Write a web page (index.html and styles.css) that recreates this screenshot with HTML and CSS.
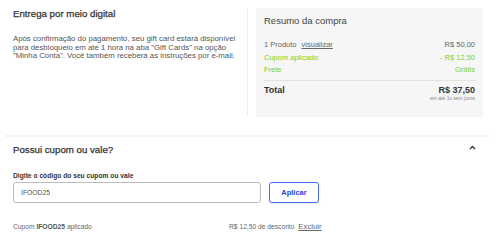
FILE: index.html
```html
<!DOCTYPE html>
<html lang="pt-BR">
<head>
<meta charset="utf-8">
<link rel="stylesheet" href="styles.css">
</head>
<body>
<div class="top">
  <div class="delivery">
    <h2 class="title">Entrega por meio digital</h2>
    <p class="desc">Após confirmação do pagamento, seu gift card estará disponível para desbloqueio em até 1 hora na aba "Gift Cards" na opção "Minha Conta". Você também receberá as instruções por e-mail.</p>
  </div>
  <div class="summary">
    <h2 class="sum-title">Resumo da compra</h2>
    <div class="row"><span>1 Produto <a class="link">visualizar</a></span><span>R$ 50,00</span></div>
    <div class="row green"><span>Cupom aplicado</span><span>- R$ 12,50</span></div>
    <div class="row green"><span>Frete</span><span>Grátis</span></div>
    <div class="total">
      <span class="total-label">Total</span>
      <div class="total-val">
        <span class="price">R$ 37,50</span>
        <span class="terms">em até 1x sem juros</span>
      </div>
    </div>
  </div>
</div>
<div class="sep"></div>
<div class="coupon">
  <div class="coupon-head">
    <h2 class="title">Possui cupom ou vale?</h2>
    <svg class="chev" width="7" height="5" viewBox="0 0 7 5"><path d="M1 4 L3.5 1.5 L6 4" fill="none" stroke="#333" stroke-width="1.3"/></svg>
  </div>
  <label class="label">Digite o código do seu cupom ou vale</label>
  <div class="form">
    <div class="input">IFOOD25</div>
    <button class="btn">Aplicar</button>
  </div>
  <div class="applied">
    <span class="applied-left">Cupom <b>IFOOD25</b> aplicado</span>
    <span class="applied-right">R$ 12,50 de desconto <a class="excluir">Excluir</a></span>
  </div>
</div>
</body>
</html>
```
FILE: styles.css
```css
* { box-sizing: border-box; }
body {
  margin: 0;
  font-family: "Liberation Sans", Arial, sans-serif;
  color: #333;
  background: #fff;
  width: 500px;
  height: 242px;
  overflow: hidden;
}
.top {
  display: flex;
  padding: 8px 0 0 13px;
}
.delivery {
  width: 235px;
  height: 108px;
  border-right: 1px solid #ececec;
}
.title {
  margin: 0;
  font-size: 9.7px;
  font-weight: normal;
  color: #333;
  -webkit-text-stroke: 0.25px #333;
  line-height: 12px;
}
.desc {
  margin: 15px 0 0;
  font-size: 7.8px;
  line-height: 8.5px;
  color: #555;
}
.summary {
  margin-left: 8px;
  width: 227px;
  height: 109px;
  background: #f6f6f6;
  padding: 7px 8px 0 8px;
}
.sum-title {
  margin: 0 0 12px;
  font-size: 9.5px;
  font-weight: normal;
  color: #444;
  line-height: 12px;
}
.row {
  display: flex;
  justify-content: space-between;
  font-size: 7.5px;
  line-height: 12.5px;
  color: #666;
}
.link { text-decoration: underline; margin-left: 3px; color: #666; }
.green { color: #7ed321; }
.total {
  margin-top: 3px;
  border-top: 1px solid #e2e2e2;
  padding-top: 4px;
  display: flex;
  justify-content: space-between;
  align-items: flex-start;
}
.total-label, .price {
  font-size: 9px;
  font-weight: bold;
  color: #333;
  line-height: 10px;
}
.total-val {
  display: flex;
  flex-direction: column;
  align-items: flex-end;
}
.terms {
  font-size: 5px;
  color: #888;
  line-height: 7px;
}
.sep {
  margin: 18px 10px 0 5px;
  height: 2px;
  background: #f3f3f3;
}
.coupon {
  padding: 7px 17px 0 13px;
}
.coupon-head {
  display: flex;
  justify-content: space-between;
  align-items: center;
}
.chev { margin-right: 7px; margin-top: -6px; }
.label {
  display: block;
  margin-top: 15px;
  font-size: 6.7px;
  font-weight: bold;
  color: #333;
  line-height: 9px;
}
.form {
  display: flex;
  gap: 8px;
  margin-top: 2px;
}
.input {
  width: 248px;
  height: 21px;
  border: 1px solid #bdbdbd;
  border-radius: 3px;
  font-size: 6.8px;
  color: #555;
  padding-left: 7px;
  display: flex;
  align-items: center;
}
.btn {
  width: 50px;
  height: 21px;
  border: 1.5px solid #4a6cf7;
  border-radius: 3px;
  background: #fff;
  color: #2442e0;
  font-family: "Liberation Sans", Arial, sans-serif;
  font-size: 7.5px;
  font-weight: bold;
  padding: 0;
  box-shadow: 0 1px 2px rgba(0,0,0,0.1);
}
.applied {
  display: flex;
  align-items: baseline;
  margin-top: 19px;
  font-size: 6.7px;
  color: #666;
  line-height: 9px;
}
.applied-left { width: 216px; }
.applied b { color: #555; }
.excluir { text-decoration: underline; font-size: 7.8px; color: #666; margin-left: 2px; }
```
